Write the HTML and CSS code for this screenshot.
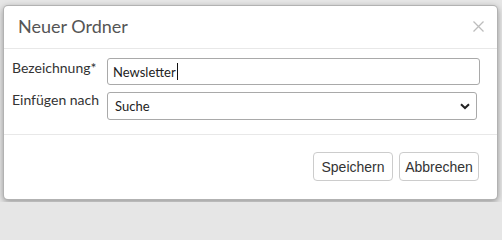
FILE: index.html
```html
<!DOCTYPE html>
<html lang="de">
<head>
<meta charset="utf-8">
<title>Neuer Ordner</title>
<link rel="stylesheet" href="styles.css">
</head>
<body>
<div class="modal">
  <div class="modal-header">
    <h4 class="modal-title">Neuer Ordner</h4>
    <span class="close" aria-label="Schließen">
      <svg width="11" height="11" viewBox="0 0 11 11"><path d="M0.5 0.5 L10.5 10.5 M10.5 0.5 L0.5 10.5" stroke="#bdbdbd" stroke-width="1.3" fill="none"/></svg>
    </span>
  </div>
  <div class="modal-body">
    <div class="row">
      <label class="label">Bezeichnung*</label>
      <div class="field input"><span class="value">Newsletter</span><span class="caret"></span></div>
    </div>
    <div class="row row2">
      <label class="label">Einfügen nach</label>
      <div class="field select">
        <span class="value">Suche</span>
        <svg class="chev" width="10" height="7" viewBox="0 0 10 7"><path d="M1 1.2 L5 5 L9 1.2" stroke="#222" stroke-width="2" fill="none"/></svg>
      </div>
    </div>
  </div>
  <div class="modal-footer">
    <button class="btn">Speichern</button>
    <button class="btn">Abbrechen</button>
  </div>
</div>
</body>
</html>
```
FILE: styles.css
```css
html, body {
  margin: 0;
  padding: 0;
}
body {
  background: #e6e6e6;
  width: 502px;
  height: 202px;
  overflow: hidden;
  font-family: Lato, "Liberation Sans", sans-serif;
}
.modal {
  box-sizing: border-box;
  margin: 5px 0 0 3px;
  width: 495px;
  height: 195px;
  background: #fff;
  border: 1px solid rgba(0,0,0,0.3);
  border-radius: 5px;
  box-shadow: 0 2px 6px rgba(0,0,0,0.35);
  display: flex;
  flex-direction: column;
}
.modal-header {
  height: 42px;
  border-bottom: 1px solid #e8e8e8;
  display: flex;
  align-items: center;
  justify-content: space-between;
  padding: 0 13px 0 14px;
}
.modal-title {
  margin: 0;
  font-weight: 400;
  font-size: 18px;
  color: #555;
  position: relative;
  top: -1px;
}
.close {
  display: flex;
  position: relative;
  top: -1px;
}
.modal-body {
  padding: 9px 17px 14px 8px;
  border-bottom: 1px solid #e8e8e8;
  display: flex;
  flex-direction: column;
  gap: 7px;
}
.row {
  display: flex;
  align-items: flex-start;
}
.label {
  width: 95px;
  flex: none;
  font-size: 14px;
  line-height: 20px;
  color: #333;
}
.row2 .label {
  margin-top: -2px;
}
.field {
  flex: 1;
  box-sizing: border-box;
  border: 1px solid #a9a9a9;
  border-radius: 3px;
  display: flex;
  align-items: center;
  font-size: 13px;
  color: #222;
  padding-left: 5px;
}
.input {
  height: 27px;
}
.select {
  height: 28px;
  margin-right: 3px;
  justify-content: space-between;
  padding-right: 6px;
  padding-left: 7px;
}
.caret {
  width: 1px;
  height: 17px;
  background: #111;
  margin-left: 1px;
}
.modal-footer {
  flex: 1;
  display: flex;
  justify-content: flex-end;
  align-items: flex-start;
  gap: 6px;
  padding: 17px 18px 0 0;
}
.btn {
  width: 80px;
  height: 29px;
  background: #fff;
  border: 1px solid #ccc;
  border-radius: 4px;
  font-family: "Liberation Sans", Arial, sans-serif;
  font-size: 14px;
  color: #333;
  padding: 0;
}
```
